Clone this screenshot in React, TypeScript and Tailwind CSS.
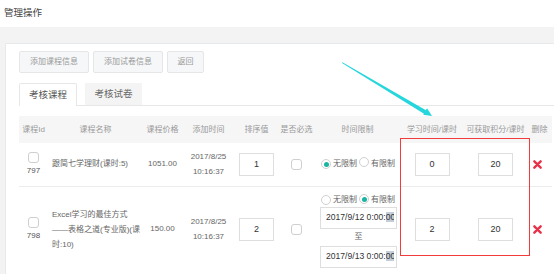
import React from "react";

function Checkbox() {
  return <div className="w-[11px] h-[11px] rounded-[3px] border border-[#cfcfcf] bg-white" />;
}

function Radio({ checked }: { checked?: boolean }) {
  return (
    <span className="inline-flex w-[10px] h-[10px] rounded-full border border-[#d0d0d0] bg-white items-center justify-center shrink-0">
      {checked && <span className="w-[5px] h-[5px] rounded-full bg-[#1ab4a2]" />}
    </span>
  );
}

function NumInput({ v }: { v: string }) {
  return (
    <div className="w-[35px] h-[23px] border border-[#dedede] bg-white flex items-center justify-center text-[9px] text-[#333] mx-auto">
      {v}
    </div>
  );
}

function RadioPair({ first }: { first: boolean }) {
  return (
    <div className="flex items-center text-[8px] text-[#666] whitespace-nowrap">
      <Radio checked={first} />
      <span className="ml-[2px]">无限制</span>
      <span className="ml-[2px]"><Radio checked={!first} /></span>
      <span className="ml-[2px]">有限制</span>
    </div>
  );
}

function DateInput({ d }: { d: string }) {
  return (
    <div className="w-[77px] h-[22px] border border-[#dedede] bg-white flex items-center pl-[5px]">
      <div className="w-[68px] overflow-hidden whitespace-nowrap text-[8.6px] text-[#333]">
        <span>{d} 0:00:</span>
        <span className="bg-[#c3cedb]">00</span>
      </div>
    </div>
  );
}

function XIcon() {
  return (
    <svg width="9" height="9" viewBox="0 0 10 10">
      <path d="M1.5 1.5 L8.5 8.5 M8.5 1.5 L1.5 8.5" stroke="#e8314a" strokeWidth="2.6" strokeLinecap="round" />
    </svg>
  );
}

export default function App() {
  const th = "h-[27px] p-0 font-normal text-[8px] text-[#999] text-center align-middle whitespace-nowrap";
  const td = "p-0 align-middle text-[8px] text-[#666]";
  return (
    <div className="relative w-[554px] h-[274px] overflow-hidden bg-white font-['Liberation_Sans','Noto_Sans_CJK_SC',sans-serif]">
      <div className="h-[27px] pl-[4px] flex items-center text-[9.5px] text-[#444]">管理操作</div>
      <div className="bg-[#f3f3f4] pl-[5px] pt-[16px] h-[247px]">
        <div className="bg-white border-l border-t border-[#e7eaec] h-full pl-[13px] pt-[7px]">
          <div className="flex gap-[4px]">
            <div className="w-[70px] h-[22px] border border-[#e5e6e7] bg-[#f5f7f8] rounded-[2px] flex items-center justify-center text-[8px] text-[#999]">添加课程信息</div>
            <div className="w-[70px] h-[22px] border border-[#e5e6e7] bg-[#f5f7f8] rounded-[2px] flex items-center justify-center text-[8px] text-[#999]">添加试卷信息</div>
            <div className="w-[37px] h-[22px] border border-[#e5e6e7] bg-[#f5f7f8] rounded-[2px] flex items-center justify-center text-[8px] text-[#999]">返回</div>
          </div>
          <div className="mt-[10px] flex items-end h-[23px] border-b border-[#e7e7e7]">
            <div className="w-[58px] h-[23px] border border-b-0 border-[#e7e7e7] bg-white rounded-t-[2px] -mb-px flex items-center justify-center text-[9.5px] text-[#555]">考核课程</div>
            <div className="ml-[8px] w-[57px] h-[22px] bg-[#f4f4f4] flex items-center justify-center text-[9.5px] text-[#666]">考核试卷</div>
          </div>
          <table className="mt-[10px] table-fixed border-collapse w-[533px]">
            <colgroup>
              <col className="w-[29px]" />
              <col className="w-[95px]" />
              <col className="w-[39px]" />
              <col className="w-[53px]" />
              <col className="w-[43px]" />
              <col className="w-[37px]" />
              <col className="w-[85px]" />
              <col className="w-[64px]" />
              <col className="w-[63px]" />
              <col className="w-[25px]" />
            </colgroup>
            <thead>
              <tr className="bg-[#f6f6f6]">
                <th className={th}>课程Id</th>
                <th className={th}>课程名称</th>
                <th className={th}>课程价格</th>
                <th className={th}>添加时间</th>
                <th className={th}>排序值</th>
                <th className={th}>是否必选</th>
                <th className={th}>时间限制</th>
                <th className={th}>学习时间/课时</th>
                <th className={th}>可获取积分/课时</th>
                <th className={th}>删除</th>
              </tr>
            </thead>
            <tbody>
              <tr className="h-[43px] border-b border-[#ececec]">
                <td className={td}>
                  <div className="flex flex-col items-center">
                    <Checkbox />
                    <span className="mt-[3px] leading-[10px] text-[#555]">797</span>
                  </div>
                </td>
                <td className={td + " pl-[4px] whitespace-nowrap"}>跟简七学理财(课时:5)</td>
                <td className={td + " text-center text-[#555]"}>1051.00</td>
                <td className={td + " text-center text-[#555] leading-[15px]"}>2017/8/25<br />10:16:37</td>
                <td className={td}><NumInput v="1" /></td>
                <td className={td}><div className="flex justify-center"><Checkbox /></div></td>
                <td className={td + " pl-[6px]"}><RadioPair first={true} /></td>
                <td className={td}><NumInput v="0" /></td>
                <td className={td}><NumInput v="20" /></td>
                <td className={td + " pl-[6px]"}><XIcon /></td>
              </tr>
              <tr className="h-[86px]">
                <td className={td}>
                  <div className="flex flex-col items-center">
                    <Checkbox />
                    <span className="mt-[3px] leading-[10px] text-[#555]">798</span>
                  </div>
                </td>
                <td className={td + " pl-[4px] leading-[15px] whitespace-nowrap"}>
                  Excel学习的最佳方式<br />——表格之道(专业版)(课<br />时:10)
                </td>
                <td className={td + " text-center text-[#555]"}>150.00</td>
                <td className={td + " text-center text-[#555] leading-[15px]"}>2017/8/25<br />10:16:37</td>
                <td className={td}><NumInput v="2" /></td>
                <td className={td}><div className="flex justify-center"><Checkbox /></div></td>
                <td className={td + " pl-[5px] pt-[2px]"}>
                  <div className="flex flex-col">
                    <div className="h-[14px] flex items-center pl-[1px]"><RadioPair first={false} /></div>
                    <DateInput d="2017/9/12" />
                    <div className="h-[17px] w-[77px] flex items-center justify-center text-[#666]">至</div>
                    <DateInput d="2017/9/13" />
                  </div>
                </td>
                <td className={td}><NumInput v="2" /></td>
                <td className={td}><NumInput v="20" /></td>
                <td className={td + " pl-[6px]"}><XIcon /></td>
              </tr>
            </tbody>
          </table>
        </div>
      </div>
      <div className="absolute left-[400px] top-[138px] w-[130px] h-[118px] border border-[#f23b3b]" />
      <svg className="absolute left-0 top-0 pointer-events-none" width="554" height="274" viewBox="0 0 554 274">
        <polygon points="342,63 342.4,62.3 426.4,110.6 424.4,114.0" fill="#25d6dc" />
        <polygon points="432,116 423.2,114.8 427.0,108.3" fill="#25d6dc" />
      </svg>
    </div>
  );
}
